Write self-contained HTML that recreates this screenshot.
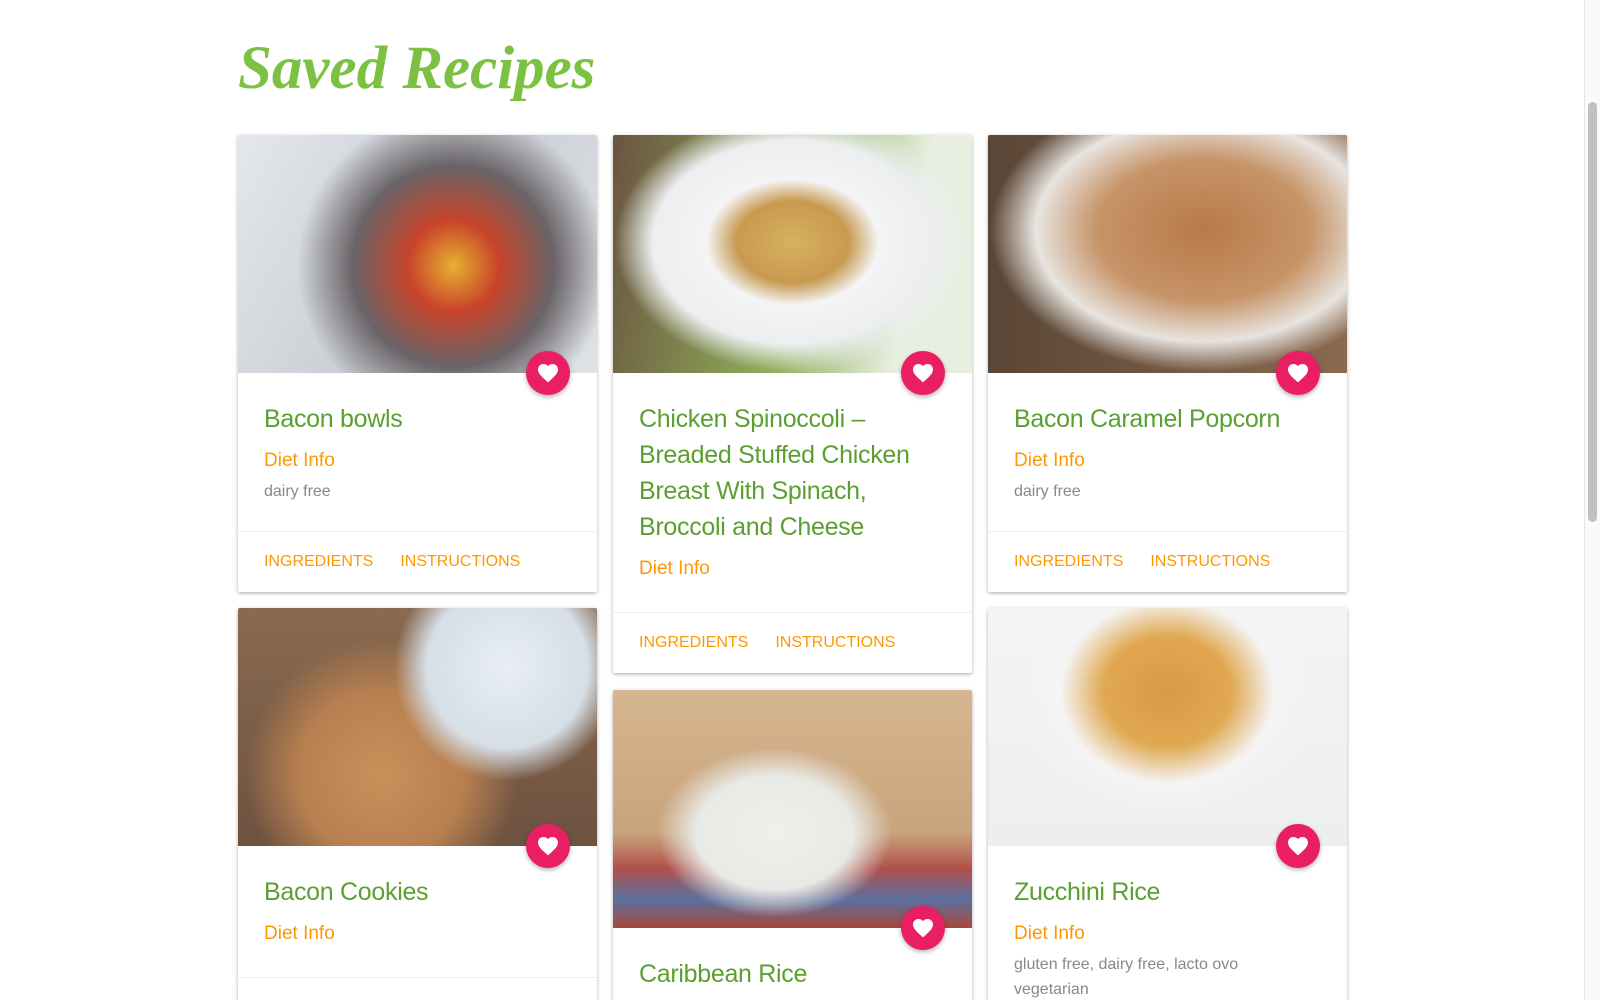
<!DOCTYPE html>
<html><head><meta charset="utf-8"><style>
*{box-sizing:border-box;margin:0;padding:0}
html,body{width:1600px;height:1000px;overflow:hidden}
body{background:#fff;font-family:"Liberation Sans",sans-serif;position:relative}
h1{position:absolute;left:238px;top:34px;font-family:"Liberation Serif",serif;font-style:italic;font-weight:bold;font-size:61px;color:#7dc142;letter-spacing:0}
.card{position:absolute;width:359px;background:#fff;box-shadow:0 1px 4px rgba(0,0,0,.25),0 2px 2px rgba(0,0,0,.08);border-radius:2px;overflow:hidden}
.img{height:238px;position:relative}
.heart{position:absolute;right:27px;top:216px;width:44px;height:44px;border-radius:50%;background:#e91e63;box-shadow:0 2px 5px rgba(0,0,0,.3);display:flex;align-items:center;justify-content:center}
.body{padding:25px 26px 0}
.t{color:#5a9f2f;font-size:25px;line-height:36px;margin-top:3px;letter-spacing:-.3px}
.d{color:#ff9800;font-size:19px;margin-top:12px;line-height:24px}
.x{color:#888;font-size:16px;margin-top:6px;line-height:25px}
.act{border-top:1px solid #eee;margin-top:27px;height:61px;padding:0 26px;display:flex;align-items:center;gap:27px;color:#ff9800;font-size:16px}
.sb{position:absolute;left:1584px;top:0;width:16px;height:1000px;background:#fafafa;border-left:1px solid #e6e6e6}
.th{position:absolute;left:1588px;top:102px;width:9px;height:420px;background:#c1c1c1;border-radius:5px}
</style></head><body>
<h1>Saved Recipes</h1>
<svg width="0" height="0" style="position:absolute"><defs><symbol id="h" viewBox="0 0 24 24"><path d="M12 21.4l-1.5-1.3C5.4 15.4 2 12.3 2 8.5 2 5.4 4.4 3 7.5 3c1.7 0 3.4.8 4.5 2.1C13.1 3.8 14.8 3 16.5 3 19.6 3 22 5.4 22 8.5c0 3.8-3.4 6.9-8.5 11.5L12 21.4z" fill="#fff"/></symbol></defs></svg>

<div class="card" style="left:238px;top:135px">
<div class="img" style="background:radial-gradient(circle at 60% 55%,#e8b030 0,#c8442a 18%,#6a6468 40%,transparent 62%),linear-gradient(120deg,#e4e8ec,#c9ced4 50%,#dfe3e8)"></div>
<div class="heart"><svg width="24" height="24"><use href="#h"/></svg></div>
<div class="body"><div class="t">Bacon bowls</div><div class="d">Diet Info</div><div class="x">dairy free</div></div>
<div class="act"><span>INGREDIENTS</span><span>INSTRUCTIONS</span></div></div>

<div class="card" style="left:613px;top:135px">
<div class="img" style="background:radial-gradient(ellipse at 50% 45%,#d8b060 0,#c89a50 22%,#f4f4f6 34%,#eceef0 55%,transparent 70%),linear-gradient(100deg,#6a5440,#8fae5a 50%,#e8efe0 80%)"></div>
<div class="heart"><svg width="24" height="24"><use href="#h"/></svg></div>
<div class="body"><div class="t">Chicken Spinoccoli – Breaded Stuffed Chicken Breast With Spinach, Broccoli and Cheese</div><div class="d">Diet Info</div></div>
<div class="act" style="margin-top:31px"><span>INGREDIENTS</span><span>INSTRUCTIONS</span></div></div>

<div class="card" style="left:988px;top:135px">
<div class="img" style="background:radial-gradient(ellipse at 60% 40%,#b87a48 0,#c69468 35%,#e8e4e0 55%,transparent 70%),linear-gradient(90deg,#5a4636,#8a6a50)"></div>
<div class="heart"><svg width="24" height="24"><use href="#h"/></svg></div>
<div class="body"><div class="t">Bacon Caramel Popcorn</div><div class="d">Diet Info</div><div class="x">dairy free</div></div>
<div class="act"><span>INGREDIENTS</span><span>INSTRUCTIONS</span></div></div>

<div class="card" style="left:238px;top:608px">
<div class="img" style="background:radial-gradient(circle at 75% 25%,#e8eef4 0,#d6dee6 25%,transparent 35%),radial-gradient(circle at 40% 70%,#c8905a 0,#b88050 30%,transparent 50%),linear-gradient(180deg,#8a6a50,#6e5240)"></div>
<div class="heart"><svg width="24" height="24"><use href="#h"/></svg></div>
<div class="body"><div class="t">Bacon Cookies</div><div class="d">Diet Info</div></div>
<div class="act" style="margin-top:31px"></div></div>

<div class="card" style="left:613px;top:690px">
<div class="img" style="background:radial-gradient(ellipse at 45% 60%,#f0f0ea 0,#e8eae6 28%,transparent 42%),linear-gradient(180deg,#d6b690 0,#c8a47c 60%,#b0504a 75%,#5a70a0 88%,#a84838 100%)"></div>
<div class="heart"><svg width="24" height="24"><use href="#h"/></svg></div>
<div class="body"><div class="t">Caribbean Rice</div><div class="d">Diet Info</div></div></div>

<div class="card" style="left:988px;top:608px">
<div class="img" style="background:radial-gradient(ellipse at 50% 35%,#d89a48 0,#e0a850 25%,#f4f4f4 42%,transparent 60%),linear-gradient(180deg,#f4f4f6,#eceef0)"></div>
<div class="heart"><svg width="24" height="24"><use href="#h"/></svg></div>
<div class="body"><div class="t">Zucchini Rice</div><div class="d">Diet Info</div><div class="x" style="max-width:255px">gluten free, dairy free, lacto ovo vegetarian</div></div>
<div class="act"></div></div>

<div class="sb"></div><div class="th"></div>
</body></html>
